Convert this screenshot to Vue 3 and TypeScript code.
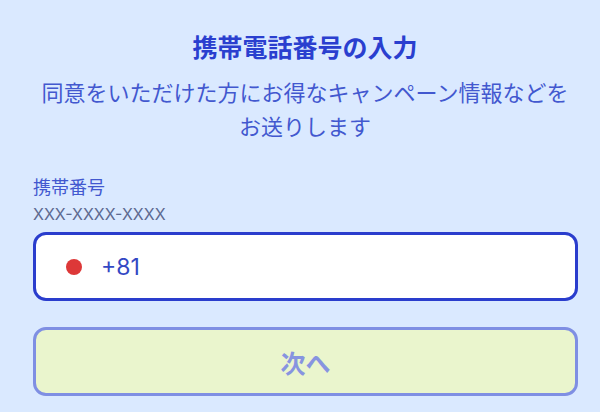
<script setup lang="ts">
const title = '携帯電話番号の入力'
</script>

<template>
  <main class="page">
    <h1 class="title">{{ title }}</h1>
    <p class="lead">同意をいただけた方にお得なキャンペーン情報などを<br />お送りします</p>
    <div class="label">携帯番号</div>
    <div class="hint">XXX-XXXX-XXXX</div>
    <div class="field">
      <span class="flag"></span>
      <span class="code">+81</span>
    </div>
    <button class="next" type="button">次へ</button>
  </main>
</template>

<style scoped>
.page {
  box-sizing: border-box;
  width: 600px;
  height: 412px;
  overflow: hidden;
  padding: 31px 22px 0 33px;
  background: #dae9ff;
  color: #2b3fd0;
  font-family: "Inter", "Noto Sans CJK JP", sans-serif;
}
.title {
  margin: 0 0 0 -1px;
  text-align: center;
  font-size: 25px;
  line-height: 34px;
  font-weight: 700;
  color: #2a3fcf;
}
.lead {
  margin: 11px 0 0 -1px;
  text-align: center;
  font-size: 22px;
  line-height: 34px;
  color: #4258cf;
}
.label {
  margin-top: 32px;
  font-size: 18px;
  line-height: 24px;
  color: #4258cf;
}
.hint {
  margin-top: 3px;
  font-size: 16px;
  line-height: 22px;
  color: #5d6a91;
}
.field {
  box-sizing: border-box;
  display: flex;
  align-items: center;
  gap: 19px;
  height: 69px;
  margin-top: 7px;
  padding-left: 30px;
  background: #fff;
  border: 3px solid #2a3dcd;
  border-radius: 13px;
}
.flag {
  width: 16px;
  height: 16px;
  border-radius: 50%;
  background: #dd3838;
}
.code {
  font-size: 23px;
  color: #3348c4;
}
.next {
  display: block;
  box-sizing: border-box;
  width: 100%;
  height: 69px;
  margin-top: 26px;
  background: #eaf5cd;
  border: 3px solid #7f8fe3;
  border-radius: 13px;
  font-family: inherit;
  font-size: 25px;
  font-weight: 700;
  color: #8794e0;
}
</style>
